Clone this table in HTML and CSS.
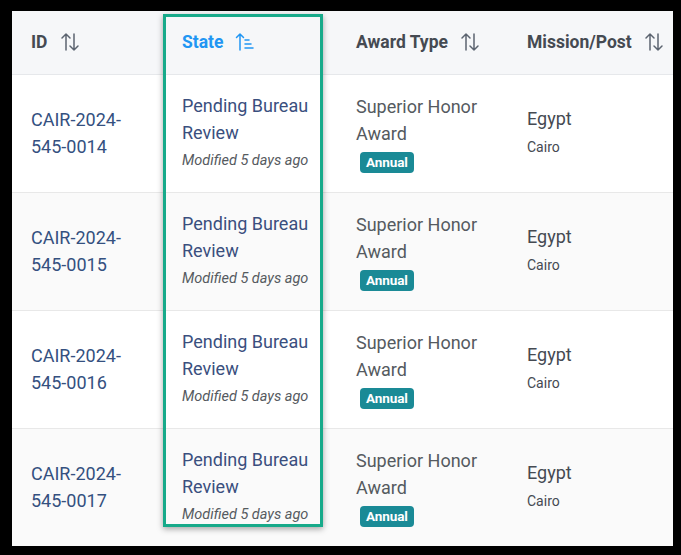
FILE: index.html
```html
<!DOCTYPE html>
<html>
<head>
<meta charset="utf-8">
<link rel="stylesheet" href="styles.css">
</head>
<body>
<div class="panel">
  <table class="grid">
    <colgroup>
      <col class="c-id"><col class="c-state"><col class="c-award"><col class="c-mission">
    </colgroup>
    <thead>
      <tr>
        <th><span class="th-in">ID <svg class="sort" viewBox="0 0 20 20"><path d="M6 18V2M2 6l4-4 4 4M14 2v16M10 14l4 4 4-4"/></svg></span></th>
        <th class="active"><span class="th-in">State <svg class="sort" viewBox="0 0 20 20"><path d="M5 18V2M1.5 5.5L5 2l3.5 3.5M10 8h4M10 12h6M10 16h8"/></svg></span></th>
        <th><span class="th-in">Award Type <svg class="sort" viewBox="0 0 20 20"><path d="M6 18V2M2 6l4-4 4 4M14 2v16M10 14l4 4 4-4"/></svg></span></th>
        <th><span class="th-in">Mission/Post <svg class="sort" viewBox="0 0 20 20"><path d="M6 18V2M2 6l4-4 4 4M14 2v16M10 14l4 4 4-4"/></svg></span></th>
      </tr>
    </thead>
    <tbody>
      <tr>
        <td class="id">CAIR-2024-545-0014</td>
        <td><div class="state">Pending Bureau Review</div><div class="mod">Modified 5 days ago</div></td>
        <td><div class="award">Superior Honor Award</div><span class="badge">Annual</span></td>
        <td><div class="country">Egypt</div><div class="city">Cairo</div></td>
      </tr>
      <tr class="alt">
        <td class="id">CAIR-2024-545-0015</td>
        <td><div class="state">Pending Bureau Review</div><div class="mod">Modified 5 days ago</div></td>
        <td><div class="award">Superior Honor Award</div><span class="badge">Annual</span></td>
        <td><div class="country">Egypt</div><div class="city">Cairo</div></td>
      </tr>
      <tr>
        <td class="id">CAIR-2024-545-0016</td>
        <td><div class="state">Pending Bureau Review</div><div class="mod">Modified 5 days ago</div></td>
        <td><div class="award">Superior Honor Award</div><span class="badge">Annual</span></td>
        <td><div class="country">Egypt</div><div class="city">Cairo</div></td>
      </tr>
      <tr class="alt">
        <td class="id">CAIR-2024-545-0017</td>
        <td><div class="state">Pending Bureau Review</div><div class="mod">Modified 5 days ago</div></td>
        <td><div class="award">Superior Honor Award</div><span class="badge">Annual</span></td>
        <td><div class="country">Egypt</div><div class="city">Cairo</div></td>
      </tr>
    </tbody>
  </table>
  <div class="highlight"></div>
</div>
</body>
</html>
```

FILE: styles.css
```css
html, body {
  margin: 0;
  padding: 0;
  background: #000;
}
body {
  width: 681px;
  height: 555px;
  overflow: hidden;
  font-family: Roboto, "Liberation Sans", sans-serif;
}
.panel {
  position: relative;
  margin: 11px 0 0 12px;
  width: 661px;
  height: 535px;
  background: #fff;
  overflow: hidden;
}
.grid {
  border-collapse: collapse;
  table-layout: fixed;
  width: 676px;
}
.c-id { width: 151px; }
.c-state { width: 174px; }
.c-award { width: 171px; }
.c-mission { width: 180px; }

thead tr {
  background: #f6f7f9;
  height: 63px;
}
th {
  text-align: left;
  padding: 0 0 0 19px;
  font-size: 17.5px;
  font-weight: 700;
  color: #454a52;
  border-bottom: 1px solid #e6e8eb;
  vertical-align: middle;
}
.th-in {
  display: inline-flex;
  align-items: center;
  gap: 12px;
}
.sort {
  width: 20px;
  height: 20px;
  fill: none;
  stroke: #5c6470;
  stroke-width: 1.5;
  stroke-linecap: round;
  stroke-linejoin: round;
}
th.active { color: #2196f3; }
th.active .sort { stroke: #2196f3; }

tbody tr {
  height: 118px;
  background: #fff;
}
tbody tr.alt { background: #fafafa; }
td {
  padding: 0 19px;
  vertical-align: middle;
  border-bottom: 1px solid #e8e8e8;
  font-size: 18px;
  line-height: 27px;
}
td.id { color: #34507f; }
.state { color: #3a4f7e; }
.mod {
  font-size: 14.5px;
  font-style: italic;
  color: #555a60;
  line-height: 20px;
  margin: 5px 0 4px;
}
.award { color: #555a60; }
.badge {
  display: inline-block;
  margin: 4px 0 0 4px;
  background: #1a8a96;
  color: #fff;
  font-size: 13.5px;
  font-weight: 700;
  line-height: 21px;
  padding: 0 6px;
  border-radius: 4px;
  letter-spacing: -0.1px;
}
.country { color: #454a52; }
.city {
  font-size: 14px;
  line-height: 20px;
  color: #454a52;
  margin: 5px 0 5px;
}
.highlight {
  position: absolute;
  left: 151px;
  top: 3px;
  width: 154px;
  height: 507px;
  border: 3px solid #17aa8a;
  box-shadow: 0 2px 6px rgba(0,0,0,0.35);
  pointer-events: none;
}
```
